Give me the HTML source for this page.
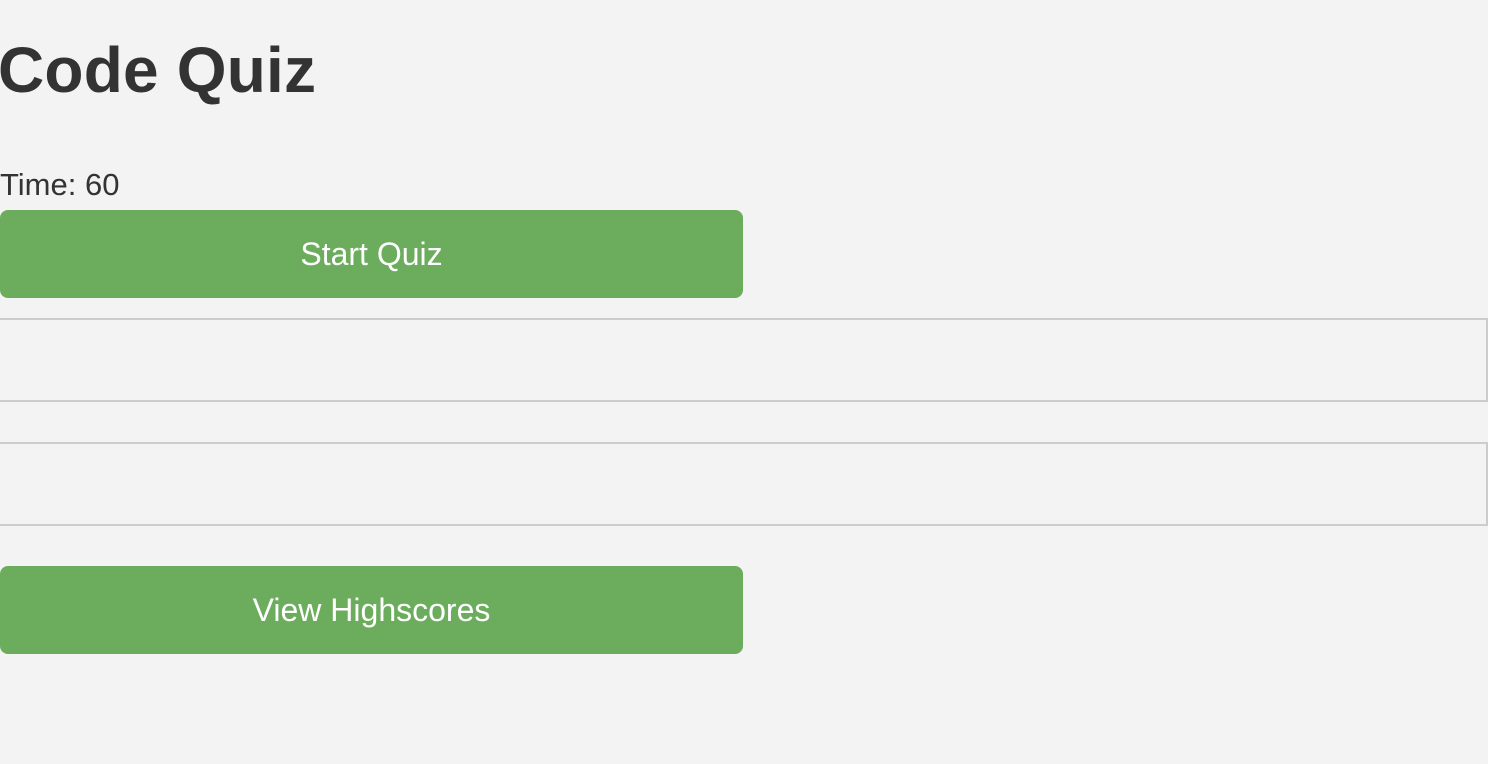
<!DOCTYPE html>
<html><head><style>
body{margin:0;background:#f3f3f3;font-family:"Liberation Sans",Arial,sans-serif;color:#333;width:1488px;height:764px;overflow:hidden;position:relative}
h1{position:absolute;left:-2px;top:25px;margin:0;font-size:64px;font-weight:bold;line-height:90px;letter-spacing:0.2px}
.time{position:absolute;left:0;top:168px;font-size:31px;line-height:34px}
.btn{position:absolute;left:0;width:743px;height:88px;background:#6bad5c;border-radius:8px;color:#fff;font-size:32px;display:flex;align-items:center;justify-content:center}
.box{position:absolute;left:-2px;width:1486px;height:80px;border:2px solid #ccc;box-sizing:content-box}
</style></head><body>
<h1>Code Quiz</h1>
<div class="time">Time: 60</div>
<div class="btn" style="top:210px">Start Quiz</div>
<div class="box" style="top:318px"></div>
<div class="box" style="top:442px"></div>
<div class="btn" style="top:566px">View Highscores</div>
</body></html>
